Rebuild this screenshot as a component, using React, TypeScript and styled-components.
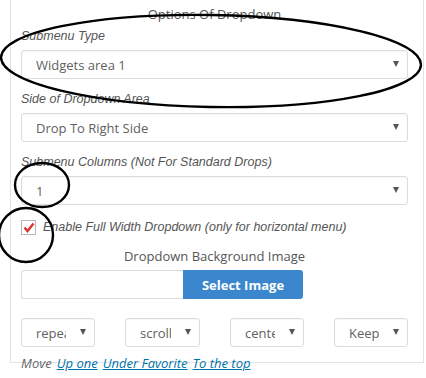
import * as React from "react";
import styled, { createGlobalStyle } from "styled-components";

const GlobalStyle = createGlobalStyle`
  html, body {
    margin: 0;
    padding: 0;
    background: #fff;
  }
  body {
    font-family: "Open Sans", "DejaVu Sans", sans-serif;
    color: #555;
  }
`;

const SPage = styled.div`
  position: relative;
  width: 426px;
  height: 378px;
  overflow: hidden;
`;

const SPanel = styled.div`
  margin-left: 10px;
  width: 414px;
  border: 1px solid #e3e3e3;
  border-top: none;
  padding: 5px 15px 15px 10px;
  box-sizing: border-box;
`;

const STitle = styled.div<{ $top?: number }>`
  font-size: 13px;
  line-height: 18px;
  text-align: center;
  color: #555;
  margin-top: ${(p) => p.$top ?? 0}px;
`;

const SLabel = styled.div<{ $top: number }>`
  font-family: "Liberation Sans", Arial, sans-serif;
  font-style: italic;
  font-size: 12.5px;
  line-height: 16px;
  color: #555;
  margin-top: ${(p) => p.$top}px;
  margin-bottom: 6px;
`;

const SSelect = styled.div<{ $width?: number }>`
  position: relative;
  height: 29px;
  width: ${(p) => (p.$width ? `${p.$width}px` : "100%")};
  box-sizing: border-box;
  border: 1px solid #dcdcdc;
  border-radius: 3px;
  box-shadow: inset 0 1px 2px rgba(0, 0, 0, 0.04);
  background: #fff;
  display: flex;
  align-items: center;
  padding: 0 ${(p) => (p.$width ? 28 : 30)}px 0 14px;
  font-size: 13px;
  color: #5f5f5f;
  white-space: nowrap;
  overflow: hidden;
`;

const SSelectText = styled.span`
  overflow: hidden;
  display: block;
  flex: 1;
`;

const SArrow = styled.span`
  position: absolute;
  right: 8px;
  top: 10px;
  width: 0;
  height: 0;
  border-left: 3.5px solid transparent;
  border-right: 3.5px solid transparent;
  border-top: 6px solid #555;
`;

const SCheckRow = styled.label`
  display: flex;
  align-items: center;
  gap: 7px;
  margin-top: 14px;
  font-family: "Liberation Sans", Arial, sans-serif;
  font-style: italic;
  font-size: 12.5px;
  line-height: 16px;
  color: #555;
`;

const SCheckbox = styled.span`
  width: 15px;
  height: 15px;
  box-sizing: border-box;
  border: 1px solid #b4b9be;
  background: #fff;
  display: flex;
  align-items: center;
  justify-content: center;
  flex-shrink: 0;
`;

const SUploadRow = styled.div`
  display: flex;
  margin-top: 5px;
  height: 29px;
`;

const SInput = styled.div`
  width: 162px;
  box-sizing: border-box;
  border: 1px solid #dcdcdc;
  border-right: none;
  border-radius: 3px 0 0 3px;
`;

const SButton = styled.button`
  width: 120px;
  border: none;
  border-radius: 0 3px 3px 0;
  background: #3b87cd;
  color: #fff;
  font-family: "Open Sans", sans-serif;
  font-weight: 700;
  font-size: 13px;
  padding: 0;
`;

const SOptionsRow = styled.div`
  display: flex;
  justify-content: space-between;
  margin-top: 19px;
`;

const SMoveRow = styled.div`
  display: flex;
  gap: 5px;
  margin: -9px 0 0 21px;
  font-size: 13px;
  line-height: 18px;
  font-style: italic;
`;

const SMove = styled.span`
  color: #666;
`;

const SLink = styled.a`
  color: #0073aa;
  text-decoration: underline;
`;

const SMarks = styled.svg`
  position: absolute;
  left: 0;
  top: 0;
  pointer-events: none;
`;

const Select = ({ value, width }: { value: string; width?: number }) => (
  <SSelect $width={width}>
    <SSelectText>{value}</SSelectText>
    <SArrow />
  </SSelect>
);

const App = () => (
  <SPage>
    <GlobalStyle />
    <SPanel>
      <STitle>Options Of Dropdown</STitle>
      <SLabel $top={5}>Submenu Type</SLabel>
      <Select value="Widgets area 1" />
      <SLabel $top={12}>Side of Dropdown Area</SLabel>
      <Select value="Drop To Right Side" />
      <SLabel $top={12}>Submenu Columns (Not For Standard Drops)</SLabel>
      <Select value="1" />
      <SCheckRow>
        <SCheckbox>
          <svg width="12" height="11" viewBox="0 0 12 11">
            <path d="M1.5 5.5 L4.5 9 L10.5 1.5" fill="none" stroke="#dd3333" strokeWidth="2.4" />
          </svg>
        </SCheckbox>
        Enable Full Width Dropdown (only for horizontal menu)
      </SCheckRow>
      <STitle $top={12}>Dropdown Background Image</STitle>
      <SUploadRow>
        <SInput />
        <SButton>Select Image</SButton>
      </SUploadRow>
      <SOptionsRow>
        <Select value="repeat" width={74} />
        <Select value="scroll" width={75} />
        <Select value="center" width={74} />
        <Select value="Keep" width={74} />
      </SOptionsRow>
    </SPanel>
    <SMoveRow>
      <SMove>Move</SMove>
      <SLink>Up one</SLink>
      <SLink>Under Favorite</SLink>
      <SLink>To the top</SLink>
    </SMoveRow>
    <SMarks width="426" height="378" viewBox="0 0 426 378">
      <ellipse cx="211" cy="61" rx="210" ry="46" transform="rotate(1 211 61)" fill="none" stroke="#000" strokeWidth="2.4" />
      <ellipse cx="42" cy="185" rx="27" ry="22" fill="none" stroke="#000" strokeWidth="2.4" />
      <ellipse cx="26" cy="235" rx="27" ry="27" fill="none" stroke="#000" strokeWidth="2.4" />
    </SMarks>
  </SPage>
);

export default App;
